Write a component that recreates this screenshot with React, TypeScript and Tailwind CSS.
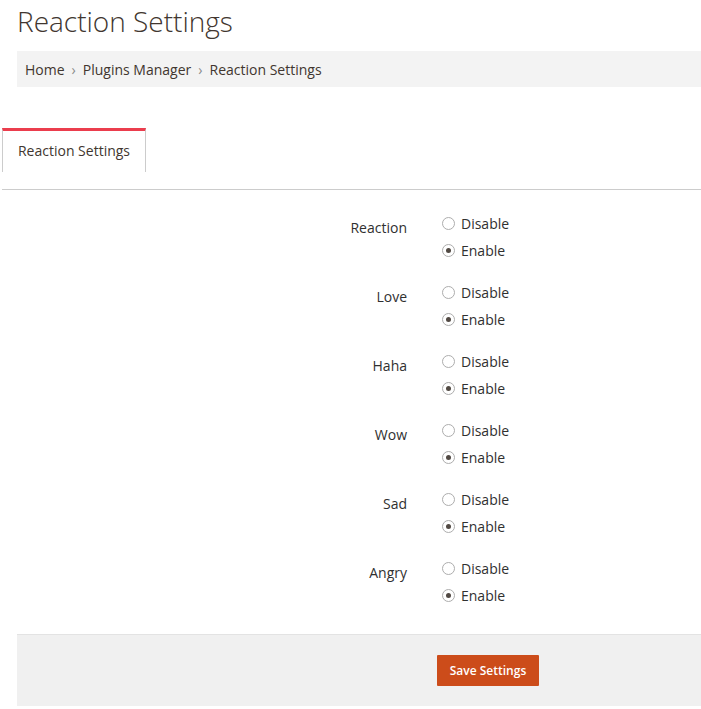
const REACTIONS = ['Reaction', 'Love', 'Haha', 'Wow', 'Sad', 'Angry'];

function Radio({ checked }: { checked?: boolean }) {
  return (
    <span className="flex h-[13px] w-[13px] items-center justify-center rounded-full border border-[#adadad] bg-white">
      {checked && <span className="h-[5px] w-[5px] rounded-full bg-[#514943]" />}
    </span>
  );
}

export default function App() {
  return (
    <div className="min-h-[709px] bg-white font-['Open_Sans',sans-serif] text-[#303030]">
      <h1 className="pl-[17px] pt-[1px] text-[28px] font-light leading-[40px] text-[#41362f]">Reaction Settings</h1>

      <div className="ml-[17px] mt-[10px] flex h-[36px] items-center bg-[#f3f3f3] pl-[8px] text-[14px] text-[#41362f]">
        <span>Home</span>
        <span className="mx-[7px] text-[14px] text-[#8a8a8a]">›</span>
        <span>Plugins Manager</span>
        <span className="mx-[7px] text-[14px] text-[#8a8a8a]">›</span>
        <span>Reaction Settings</span>
      </div>

      <div className="ml-[2px] mt-[41px] border-b border-[#cccccc] pb-[17px]">
        <div className="flex h-[44px] w-[144px] items-center justify-center border-x border-t-[3px] border-x-[#cccccc] border-t-[#eb3d4d] pb-[3px] text-[14px] text-[#41362f]">
          Reaction Settings
        </div>
      </div>

      <div className="flex flex-col gap-[15px] pt-[20px]">
        {REACTIONS.map((r) => (
          <div key={r} className="flex">
            <div className="w-[407px] pt-[8px] text-right text-[14px] leading-[20px]">{r}</div>
            <div className="ml-[35px] flex flex-col">
              <label className="flex h-[27px] items-center gap-[6px] text-[14px]">
                <Radio />
                Disable
              </label>
              <label className="flex h-[27px] items-center gap-[6px] text-[14px]">
                <Radio checked />
                Enable
              </label>
            </div>
          </div>
        ))}
      </div>

      <div className="ml-[17px] mt-[25px] flex h-[72px] items-center border-t border-[#e3e3e3] bg-[#f0f0f0] pl-[420px]">
        <button className="h-[31px] w-[102px] rounded-[1px] bg-[#cc4c1a] text-[12px] font-semibold text-white">
          Save Settings
        </button>
      </div>
    </div>
  );
}
